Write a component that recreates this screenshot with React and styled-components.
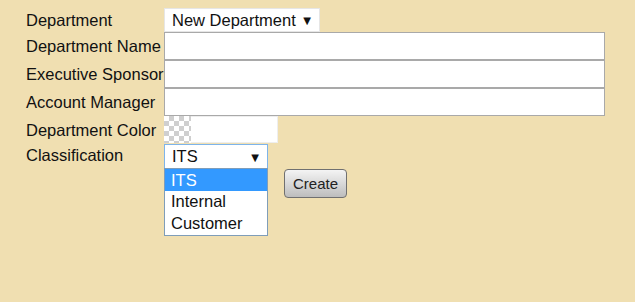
import React from "react";
import styled, { createGlobalStyle } from "styled-components";

const Global = createGlobalStyle`
  html, body { margin: 0; padding: 0; background: #f0dfb1; }
  body { font-family: "Liberation Sans", Arial, sans-serif; font-size: 16.5px; color: #111; }
  * { box-sizing: border-box; }
`;

const Page = styled.div`
  width: 635px;
  height: 302px;
  background: #f0dfb1;
  padding: 8px 0 0 26px;
`;

const Form = styled.div`
  display: grid;
  grid-template-columns: 138px 441px;
  grid-auto-rows: auto;
  align-items: center;
`;

const Label = styled.div`
  white-space: nowrap;
  overflow: visible;
  height: ${(p) => p.$h}px;
  line-height: ${(p) => p.$h}px;
  position: relative;
  z-index: 0;
  margin-top: ${(p) => p.$shift || 0}px;
`;

const Cell = styled.div`
  height: ${(p) => p.$h}px;
  display: flex;
  align-items: ${(p) => p.$align || "stretch"};
  position: relative;
  z-index: 1;
  background: transparent;
`;

const TextInput = styled.div`
  width: 441px;
  height: 28px;
  background: #fff;
  border: 1px solid #a9a9a9;
`;

const SelectBox = styled.div`
  width: ${(p) => p.$w}px;
  height: ${(p) => p.$h}px;
  background: #fff;
  border: 1px solid ${(p) => (p.$focus ? "#7eb4ea" : "#e6e6e6")};
  display: flex;
  align-items: center;
  justify-content: space-between;
  padding: 0 8px 0 7px;
  font-size: 16.5px;
  position: relative;
`;

const Arrow = styled.span`
  font-family: "DejaVu Sans", sans-serif;
  font-size: 10px;
  color: #111;
  margin-top: 1px;
`;

const ColorPicker = styled.div`
  display: flex;
  width: 114px;
  height: 27px;
`;

const Swatch = styled.div`
  width: 27px;
  height: 27px;
  background-color: #fff;
  background-image: linear-gradient(45deg, #cfcfcf 25%, transparent 25%, transparent 75%, #cfcfcf 75%),
    linear-gradient(45deg, #cfcfcf 25%, transparent 25%, transparent 75%, #cfcfcf 75%);
  background-size: 10px 10px;
  background-position: 0 0, 5px 5px;
`;

const ColorField = styled.div`
  flex: 1;
  background: #fff;
  border: 1px solid #eee;
  border-left: none;
`;

const ListBox = styled.div`
  position: absolute;
  left: -1px;
  top: 23px;
  width: 104px;
  background: #fff;
  border: 1px solid #7f9db9;
  padding-bottom: 1px;
  z-index: 5;
`;

const Option = styled.div`
  height: ${(p) => p.$h}px;
  line-height: ${(p) => p.$h}px;
  padding-left: 6px;
  font-size: 16.5px;
  background: ${(p) => (p.$active ? "#3399ff" : "#fff")};
  color: ${(p) => (p.$active ? "#fff" : "#111")};
`;

const Button = styled.button`
  margin-left: 120px;
  width: 63px;
  height: 29px;
  border: 1px solid #707070;
  border-radius: 4px;
  background: linear-gradient(#f4f4f4, #d6d6d6 55%, #bdbdbd);
  font-family: "Liberation Sans", Arial, sans-serif;
  font-size: 15px;
  color: #222;
  padding: 0;
`;

export default function App() {
  return (
    <Page>
      <Global />
      <Form>
        <Label $h={24}>Department</Label>
        <Cell $h={24}>
          <SelectBox $w={156} $h={24}>
            <span>New Department</span>
            <Arrow>▼</Arrow>
          </SelectBox>
        </Cell>

        <Label $h={28}>Department Name</Label>
        <Cell $h={28}><TextInput /></Cell>

        <Label $h={28}>Executive Sponsor</Label>
        <Cell $h={28}><TextInput /></Cell>

        <Label $h={28}>Account Manager</Label>
        <Cell $h={28}><TextInput /></Cell>

        <Label $h={28}>Department Color</Label>
        <Cell $h={28} $align="flex-start">
          <ColorPicker>
            <Swatch />
            <ColorField />
          </ColorPicker>
        </Cell>

        <Label $h={25} $shift={-3}>Classification</Label>
        <Cell $h={25}>
          <SelectBox $w={104} $h={25} $focus>
            <span>ITS</span>
            <Arrow>▼</Arrow>
            <ListBox>
              <Option $h={22} $active>ITS</Option>
              <Option $h={21}>Internal</Option>
              <Option $h={22}>Customer</Option>
            </ListBox>
          </SelectBox>
        </Cell>

        <div />
        <Cell $h={30} $align="flex-start">
          <Button>Create</Button>
        </Cell>
      </Form>
    </Page>
  );
}
